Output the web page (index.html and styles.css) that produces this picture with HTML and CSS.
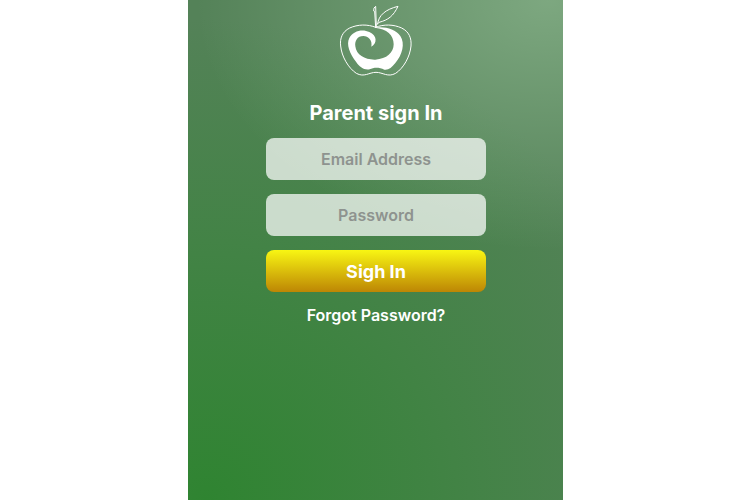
FILE: index.html
```html
<!DOCTYPE html>
<html lang="en">
<head>
    <meta charset="UTF-8">
    <meta name="viewport" content="width=device-width, initial-scale=1.0">
    <title>Parent sign In</title>
    <link rel="stylesheet" href="styles.css">
</head>
<body>
    <main class="screen">
        <!-- Apple logo -->
        <svg class="logo" viewBox="30 15 222 216" role="img" aria-label="Apple">
            <g fill="none" stroke="#fff" stroke-width="3" stroke-linejoin="round" stroke-linecap="round">
                <path d="M140 82C116 72 86 73 62 84C40 95 32 115 35 138C38 170 58 204 82 220C106 233 120 217 141 217C162 217 176 233 200 220C224 204 243 170 246 138C248 114 240 95 218 84C194 73 164 72 140 82Z"/>
                <path d="M140 82L137 34L134 33L135 24L140 19L142 82"/>
                <path d="M146 72C148 46 170 28 207 19C193 48 178 60 150 67L144 73"/>
            </g>
            <path fill="#fff" d="M137 83C166 78 200 87 214 108C229 130 220 165 199 189C188 203 178 211 166 209C150 201 134 202 122 208C106 212 91 200 82 187C62 161 51 133 61 114C72 92 101 86 121 96C145 106 145 130 127 140C131 121 118 108 103 108C85 108 77 123 79 139C82 165 108 180 139 179C173 177 194 158 194 133C194 104 174 87 137 83Z"/>
        </svg>

        <h1>Parent sign In</h1>

        <form class="login-form">
            <input type="email" id="email" placeholder="Email Address" aria-label="Email Address">
            <input type="password" id="password" placeholder="Password" aria-label="Password">
            <button type="submit">Sigh In</button>
        </form>

        <a class="forgot" href="#">Forgot Password?</a>
    </main>
</body>
</html>
```
FILE: styles.css
```css
* {
    box-sizing: border-box;
}

body {
    margin: 0;
    background-color: #fff;
    font-family: Inter, Roboto, sans-serif;
}

.screen {
    width: 50%;
    min-height: 100vh;
    margin: 0 auto;
    padding: 5px 0 0 2px;
    display: flex;
    flex-direction: column;
    align-items: center;
    color: #fff;
    /* light spot in the top right, deep green in the bottom left */
    background:
        radial-gradient(ellipse 94% 50% at 96% 0%, rgba(220, 255, 220, 0.3), rgba(220, 255, 220, 0)),
        radial-gradient(ellipse 130% 96% at 5% 100%, #2f8431, #548258);
}

.logo {
    width: 74px;
    height: 72px;
}

h1 {
    margin: 24px 0 13px;
    font-size: 20px;
    line-height: 24px;
    font-weight: 700;
}

.login-form {
    width: 59%;
    display: flex;
    flex-direction: column;
    gap: 14px;
}

.login-form input,
.login-form button {
    width: 100%;
    height: 42px;
    padding: 0 12px;
    border: none;
    border-radius: 8px;
    font-family: inherit;
    text-align: center;
}

.login-form input {
    background-color: rgba(255, 255, 255, 0.72);
    color: #333;
    font-size: 16px;
    font-weight: 600;
}

.login-form input::placeholder {
    color: #8e938f;
    opacity: 1;
}

.login-form button {
    background: linear-gradient(#f8f613, #bd8604);
    color: #fff;
    font-size: 18px;
    font-weight: 700;
    cursor: pointer;
}

.forgot {
    margin-top: 13px;
    color: #fff;
    font-size: 16px;
    line-height: 20px;
    font-weight: 600;
    text-decoration: none;
}
```
